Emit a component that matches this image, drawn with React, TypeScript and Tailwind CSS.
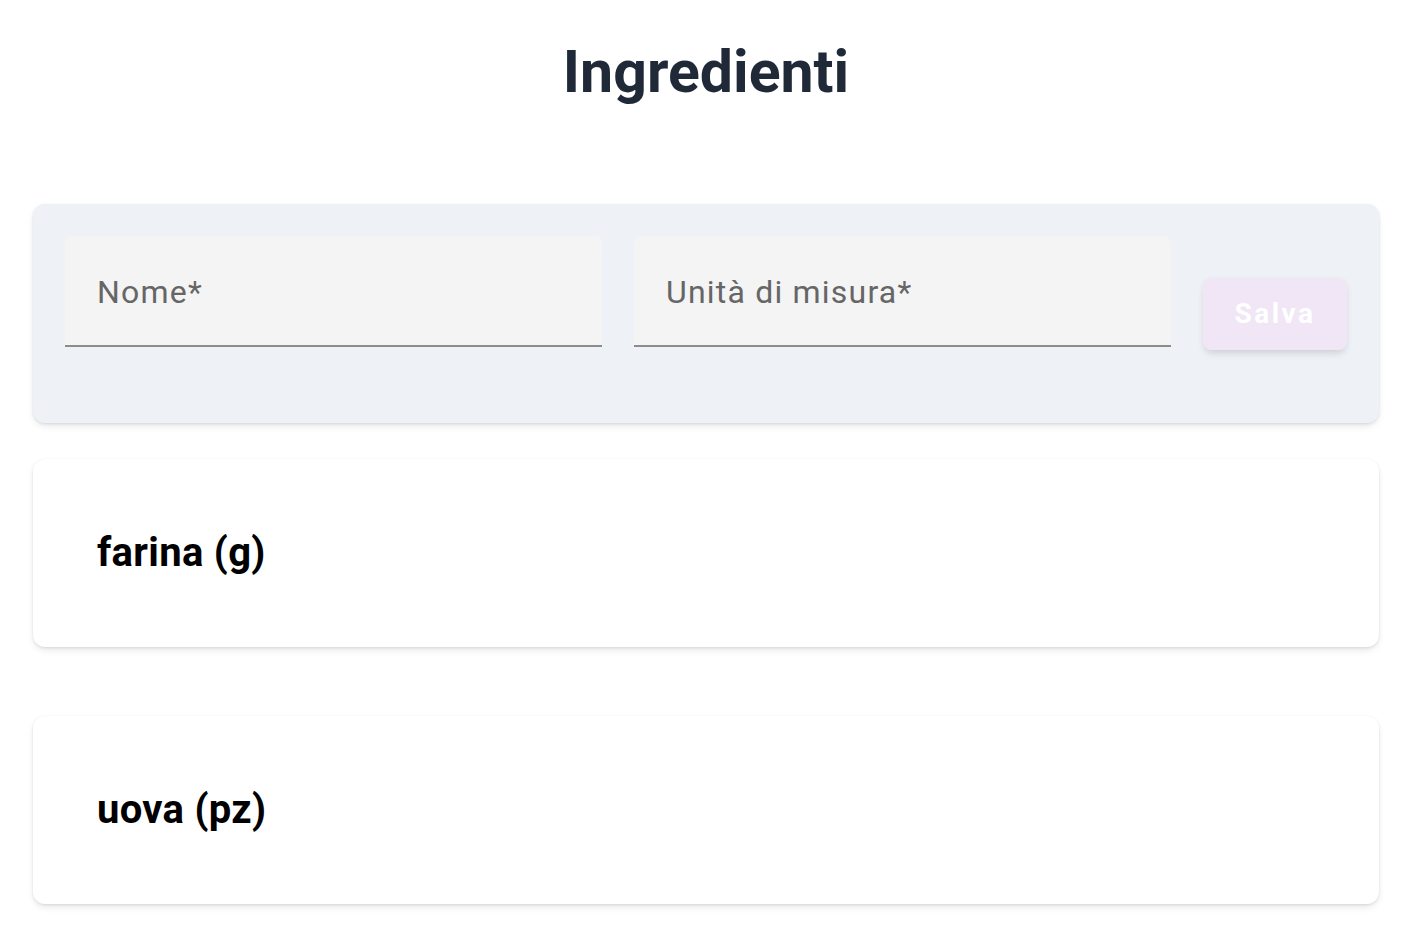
import React from "react";

const ingredients = [
  { name: "farina", unit: "g" },
  { name: "uova", unit: "pz" },
];

const cardShadow =
  "shadow-[0_4px_8px_-2px_rgba(0,0,0,0.12),0_1px_3px_0_rgba(0,0,0,0.08),0_0_2px_0_rgba(0,0,0,0.03)]";

const Field: React.FC<{ label: string }> = ({ label }) => (
  <div className="flex-1 pb-[44px]">
    <div className="h-[111px] rounded-t-lg bg-[#f4f4f5] border-b-2 border-[#8c8c8c] px-8 pt-[40px]">
      <span className="block text-[32px] leading-[32px] tracking-[1.2px] text-[#666666]">
        {label}
      </span>
    </div>
  </div>
);

export default function App() {
  return (
    <div
      className="min-h-screen bg-white pl-[33px] pr-[35px] pt-[42px]"
      style={{ fontFamily: "Roboto, 'Noto Sans', sans-serif" }}
    >
      <h1 className="text-center text-[59px] leading-[60px] font-bold text-[#1f2937]">
        Ingredienti
      </h1>

      <div
        className={`mt-[102px] flex items-center gap-8 rounded-xl bg-[#eef1f6] p-8 ${cardShadow}`}
      >
        <Field label="Nome*" />
        <Field label="Unità di misura*" />
        <button className="h-[72px] w-[144px] shrink-0 rounded-lg bg-[#f0e6f6] text-[28px] font-bold tracking-[2.5px] text-white shadow-[0_6px_8px_-3px_rgba(0,0,0,0.1),0_2px_6px_0_rgba(0,0,0,0.06)]">
          Salva
        </button>
      </div>

      {ingredients.map((item, i) => (
        <div
          key={item.name}
          className={`${i === 0 ? "mt-9" : "mt-[69px]"} flex h-[188px] items-center rounded-xl bg-white px-16 ${cardShadow}`}
        >
          <span className="text-[40px] font-bold tracking-[0.3px] text-black">
            {item.name} ({item.unit})
          </span>
        </div>
      ))}
    </div>
  );
}
